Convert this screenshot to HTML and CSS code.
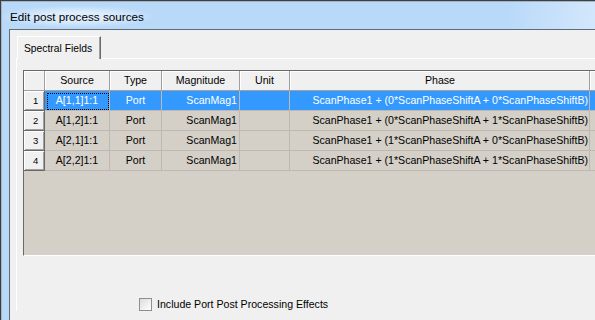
FILE: index.html
```html
<!DOCTYPE html>
<html>
<head>
<meta charset="utf-8">
<link rel="stylesheet" href="styles.css">
</head>
<body>
<div class="window">
  <div class="titlebar"><span class="title">Edit post process sources</span></div>
  <div class="client">
    <div class="tabs">
      <div class="tab">Spectral Fields</div>
    </div>
    <div class="pane">
      <div class="grid">
        <div class="row head">
          <div class="cell c-rh"></div>
          <div class="cell c-src">Source</div>
          <div class="cell c-type">Type</div>
          <div class="cell c-mag">Magnitude</div>
          <div class="cell c-unit">Unit</div>
          <div class="cell c-phase">Phase</div>
          <div class="cell c-more"></div>
        </div>
        <div class="row sel">
          <div class="cell c-rh rh">1</div>
          <div class="cell c-src focus">A[1,1]1:1</div>
          <div class="cell c-type">Port</div>
          <div class="cell c-mag">ScanMag1</div>
          <div class="cell c-unit"></div>
          <div class="cell c-phase">ScanPhase1 + (0*ScanPhaseShiftA + 0*ScanPhaseShiftB)</div>
          <div class="cell c-more"></div>
        </div>
        <div class="row">
          <div class="cell c-rh rh">2</div>
          <div class="cell c-src">A[1,2]1:1</div>
          <div class="cell c-type">Port</div>
          <div class="cell c-mag">ScanMag1</div>
          <div class="cell c-unit"></div>
          <div class="cell c-phase">ScanPhase1 + (0*ScanPhaseShiftA + 1*ScanPhaseShiftB)</div>
          <div class="cell c-more"></div>
        </div>
        <div class="row">
          <div class="cell c-rh rh">3</div>
          <div class="cell c-src">A[2,1]1:1</div>
          <div class="cell c-type">Port</div>
          <div class="cell c-mag">ScanMag1</div>
          <div class="cell c-unit"></div>
          <div class="cell c-phase">ScanPhase1 + (1*ScanPhaseShiftA + 0*ScanPhaseShiftB)</div>
          <div class="cell c-more"></div>
        </div>
        <div class="row">
          <div class="cell c-rh rh">4</div>
          <div class="cell c-src">A[2,2]1:1</div>
          <div class="cell c-type">Port</div>
          <div class="cell c-mag">ScanMag1</div>
          <div class="cell c-unit"></div>
          <div class="cell c-phase">ScanPhase1 + (1*ScanPhaseShiftA + 1*ScanPhaseShiftB)</div>
          <div class="cell c-more"></div>
        </div>
      </div>
      <label class="check"><span class="box"></span><span>Include Port Post Processing Effects</span></label>
    </div>
  </div>
</div>
</body>
</html>
```
FILE: styles.css
```css
html, body {
  margin: 0;
  padding: 0;
  overflow: hidden;
}
body {
  width: 595px;
  height: 320px;
  background: #b9d9f9;
  font-family: "Liberation Sans", Arial, sans-serif;
  color: #000;
}
.window {
  width: 595px;
  height: 320px;
  box-sizing: border-box;
  overflow: hidden;
  border-top: 1px solid #3f3f3f;
  border-left: 1px solid #3f3f3f;
  box-shadow: inset 1px 1px 0 #9fb4c8;
  background: linear-gradient(100deg, #b9d9f9 0, #b9d9f9 500px, #d6e9fc 600px);
  padding-left: 8px;
  display: flex;
  flex-direction: column;
}
.titlebar {
  height: 28px;
  flex: none;
  box-sizing: border-box;
  padding: 9px 0 0 1px;
  font-size: 11.7px;
  line-height: 14px;
}
.title {
  background: radial-gradient(ellipse at center, rgba(230, 242, 253, 0.8) 30%, rgba(185, 217, 249, 0) 75%);
  padding: 4px 8px;
  margin-left: -8px;
}
.client {
  flex: 1;
  min-height: 0;
  border-top: 1px solid #5d6b7d;
  border-left: 1px solid #5d6b7d;
  background: #f0f0f0;
  padding: 6px 0 0 6px;
}
.tabs {
  display: flex;
  height: 22px;
}
.tab {
  position: relative;
  z-index: 1;
  margin-left: 1px;
  width: 84px;
  height: 23px;
  box-sizing: border-box;
  border-top: 1px solid #fff;
  border-left: 1px solid #fff;
  border-right: 1px solid #696969;
  box-shadow: inset -1px 0 0 #a0a0a0;
  background: #f0f0f0;
  padding: 5px 0 0 6px;
  font-size: 10.3px;
  line-height: 13px;
  white-space: nowrap;
}
.pane {
  border-top: 1px solid #fff;
  border-left: 1px solid #fff;
  padding: 11px 0 0 6px;
}
.grid {
  height: 186px;
  box-sizing: border-box;
  border-top: 1px solid #696969;
  border-left: 1px solid #696969;
  border-bottom: 1px solid #fff;
  background: #d4d0c8;
  overflow: hidden;
}
.row {
  display: flex;
  height: 20px;
}
.cell {
  box-sizing: border-box;
  height: 20px;
  flex: none;
  border-right: 1px solid #bdb9b2;
  border-bottom: 1px solid #bdb9b2;
  font-size: 10.6px;
  line-height: 19px;
  white-space: nowrap;
  overflow: hidden;
  padding: 0 2px;
}
.c-rh { width: 21px; }
.c-src { width: 65px; text-align: center; }
.c-type { width: 52px; text-align: center; }
.c-mag { width: 78px; text-align: right; }
.c-unit { width: 50px; text-align: center; }
.c-phase { width: 300px; text-align: right; padding-right: 1px; }
.c-more { flex: 1; min-width: 0; border-right: none; }
.head .cell {
  background: #f0f0f0;
  border-color: #a0a0a0;
  box-shadow: inset 1px 1px 0 #fff;
  text-align: center;
}
.rh {
  background: #f0f0f0;
  border-right: 1px solid #696969;
  border-bottom: 1px solid #696969;
  box-shadow: inset 1px 1px 0 #fff, inset -1px -1px 0 #a0a0a0;
  font-size: 9.5px;
  padding-left: 9px;
  text-align: left;
}
.sel .cell:not(.rh) {
  background: #3399ff;
  color: #fff;
}
.focus {
  position: relative;
}
.focus::after {
  content: "";
  position: absolute;
  left: 2px;
  top: 2px;
  right: 0;
  bottom: 0;
  border: 1px dotted #000;
}
.check {
  display: flex;
  align-items: center;
  gap: 5px;
  margin: 42px 0 0 116px;
  font-size: 10.6px;
  line-height: 13px;
}
.box {
  width: 13px;
  height: 13px;
  box-sizing: border-box;
  border: 1px solid #8e8f8f;
  background: linear-gradient(135deg, #dcdcdc, #fff);
}
```
